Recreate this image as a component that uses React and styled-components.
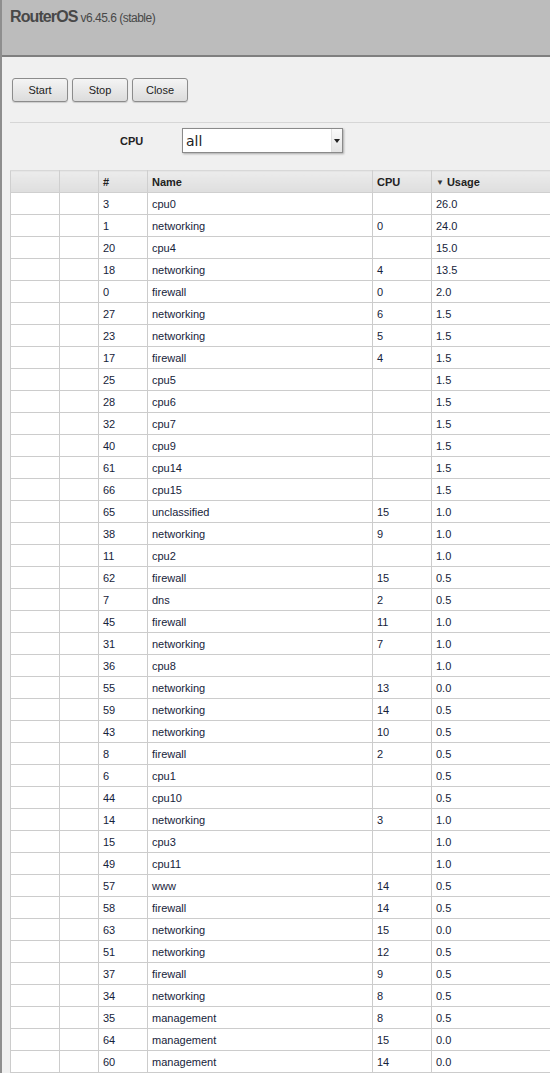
import React from 'react';
import styled, { createGlobalStyle } from 'styled-components';

const GlobalStyle = createGlobalStyle`
  html, body {
    margin: 0;
    padding: 0;
    overflow: hidden;
    background: #f0f0f0;
  }
  body {
    font-family: "Liberation Sans", Arial, sans-serif;
  }
`;

const Page = styled.div`
  height: 1073px;
  overflow: hidden;
  border-left: 2px solid #8e8e8e;
  background: #f0f0f0;
`;

const Header = styled.div`
  height: 57px;
  background: #bcbcbc;
  border-bottom: 2px solid #7f7f7f;
  padding: 8px 0 0 8px;
  box-sizing: border-box;
`;

const Brand = styled.span`
  font-size: 16px;
  font-weight: bold;
  letter-spacing: -0.9px;
  color: #484848;
`;

const Version = styled.span`
  font-size: 12px;
  letter-spacing: -0.5px;
  color: #484848;
  margin-left: 3px;
`;

const Toolbar = styled.div`
  display: flex;
  gap: 4px;
  padding: 21px 0 20px 2px;
  border-bottom: 1px solid #d6d6d6;
  margin-left: 8px;
`;

const Button = styled.button`
  width: 56px;
  height: 24px;
  font-family: "Liberation Sans", Arial, sans-serif;
  font-size: 11px;
  color: #222;
  border: 1px solid #8c8c8c;
  border-radius: 3px;
  background: linear-gradient(#f4f4f4, #dcdcdc);
  box-shadow: 0 1px 1px rgba(0, 0, 0, 0.15);
  padding: 0;
`;

const FilterRow = styled.div`
  display: flex;
  align-items: center;
  padding: 5px 0 0 118px;
  height: 25px;
`;

const FilterLabel = styled.label`
  width: 62px;
  font-size: 11px;
  font-weight: bold;
  color: #222;
`;

const Select = styled.div`
  position: relative;
  width: 161px;
  height: 25px;
  background: #fff;
  border: 1px solid #8a8a8a;
  box-shadow: 1px 1px 2px rgba(0, 0, 0, 0.3);
  font-family: "DejaVu Sans", sans-serif;
  font-size: 14px;
  color: #222;
  display: flex;
  align-items: center;
  padding-left: 3px;
  box-sizing: border-box;
`;

const Arrow = styled.span`
  position: absolute;
  right: 0;
  top: 0;
  bottom: 0;
  width: 10px;
  background: linear-gradient(#fafafa, #e4e4e4);
  border-left: 1px solid #e0e0e0;
  display: flex;
  align-items: center;
  justify-content: center;
  &::after {
    content: '';
    border-left: 3px solid transparent;
    border-right: 3px solid transparent;
    border-top: 4px solid #222;
  }
`;

const TableWrap = styled.div`
  margin: 17px 0 0 8px;
  width: 600px;
`;

const Table = styled.table`
  border-collapse: collapse;
  table-layout: fixed;
  width: 600px;
  font-size: 11px;
  color: #16233a;
  background: #fff;
`;

const Th = styled.th`
  width: ${({ w }) => w}px;
  height: 22px;
  padding: 0 4px;
  text-align: left;
  font-weight: bold;
  color: #222;
  background: linear-gradient(#ececec, #dedede);
  border: 1px solid #cfcfcf;
  border-top-color: #d8d8d8;
  box-sizing: border-box;
  white-space: nowrap;
`;

const SortMark = styled.span`
  font-size: 8px;
  margin-right: 3px;
  color: #333;
  vertical-align: 1px;
`;

const Td = styled.td`
  height: 22px;
  padding: 0 4px;
  border: 1px solid #cccccc;
  box-sizing: border-box;
  white-space: nowrap;
  overflow: hidden;
`;

const rows = [
  [3, 'cpu0', '', '26.0'],
  [1, 'networking', '0', '24.0'],
  [20, 'cpu4', '', '15.0'],
  [18, 'networking', '4', '13.5'],
  [0, 'firewall', '0', '2.0'],
  [27, 'networking', '6', '1.5'],
  [23, 'networking', '5', '1.5'],
  [17, 'firewall', '4', '1.5'],
  [25, 'cpu5', '', '1.5'],
  [28, 'cpu6', '', '1.5'],
  [32, 'cpu7', '', '1.5'],
  [40, 'cpu9', '', '1.5'],
  [61, 'cpu14', '', '1.5'],
  [66, 'cpu15', '', '1.5'],
  [65, 'unclassified', '15', '1.0'],
  [38, 'networking', '9', '1.0'],
  [11, 'cpu2', '', '1.0'],
  [62, 'firewall', '15', '0.5'],
  [7, 'dns', '2', '0.5'],
  [45, 'firewall', '11', '1.0'],
  [31, 'networking', '7', '1.0'],
  [36, 'cpu8', '', '1.0'],
  [55, 'networking', '13', '0.0'],
  [59, 'networking', '14', '0.5'],
  [43, 'networking', '10', '0.5'],
  [8, 'firewall', '2', '0.5'],
  [6, 'cpu1', '', '0.5'],
  [44, 'cpu10', '', '0.5'],
  [14, 'networking', '3', '1.0'],
  [15, 'cpu3', '', '1.0'],
  [49, 'cpu11', '', '1.0'],
  [57, 'www', '14', '0.5'],
  [58, 'firewall', '14', '0.5'],
  [63, 'networking', '15', '0.0'],
  [51, 'networking', '12', '0.5'],
  [37, 'firewall', '9', '0.5'],
  [34, 'networking', '8', '0.5'],
  [35, 'management', '8', '0.5'],
  [64, 'management', '15', '0.0'],
  [60, 'management', '14', '0.0'],
];

const App = () => {
  return (
    <Page>
      <GlobalStyle />
      <Header>
        <Brand>RouterOS</Brand>
        <Version>v6.45.6 (stable)</Version>
      </Header>
      <Toolbar>
        <Button>Start</Button>
        <Button>Stop</Button>
        <Button>Close</Button>
      </Toolbar>
      <FilterRow>
        <FilterLabel>CPU</FilterLabel>
        <Select>
          all
          <Arrow />
        </Select>
      </FilterRow>
      <TableWrap>
        <Table>
          <thead>
            <tr>
              <Th w={49}></Th>
              <Th w={39}></Th>
              <Th w={49}>#</Th>
              <Th w={225}>Name</Th>
              <Th w={59}>CPU</Th>
              <Th w={179}>
                <SortMark>▼</SortMark>Usage
              </Th>
            </tr>
          </thead>
          <tbody>
            {rows.map(([id, name, cpu, usage]) => (
              <tr key={id}>
                <Td></Td>
                <Td></Td>
                <Td>{id}</Td>
                <Td>{name}</Td>
                <Td>{cpu}</Td>
                <Td>{usage}</Td>
              </tr>
            ))}
          </tbody>
        </Table>
      </TableWrap>
    </Page>
  );
};

export default App;
